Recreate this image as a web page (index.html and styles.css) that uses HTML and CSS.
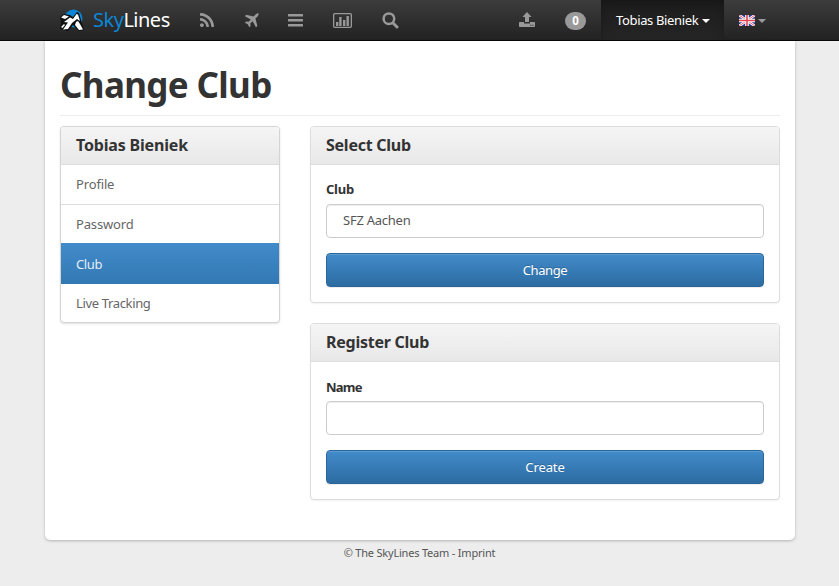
FILE: index.html
```html
<!DOCTYPE html>
<html lang="en">
<head>
<meta charset="utf-8">
<title>SkyLines - Change Club</title>
<link rel="stylesheet" href="styles.css">
</head>
<body>
<nav class="navbar">
  <div class="navbar-inner">
    <a class="brand" href="#">
      <svg class="logo" width="24" height="22" viewBox="0 0 24 22">
        <circle cx="13.500" cy="9.500" r="9" fill="#0b86d6"/>
        <path d="M0 8l4-3 6 1 3 2 4-5 2 1 5 17-5 1-6-6-5 6-8-2 1-6z" fill="#111"/>
        <path d="M1 8.500L4 6l5 1.500L5 10zM4 13l6-4.500L13 10l3.500-5 1.500.5L20 12l-3-2-5 4-4 6-5 .5 5-7zM1 18l3-3 1 1-2.500 3zM16 13l2-1 2 3 3 5.500-4 .5-4-5z" fill="#fff"/>
      </svg>
      <span class="brand-name"><span class="sky">Sky</span>Lines</span>
    </a>
    <a class="icon rss" href="#"><svg width="14" height="14" viewBox="0 128 1408 1408"><path d="M384 1344q0 80-56 136t-136 56-136-56-56-136 56-136 136-56 136 56 56 136zm512 123q2 28-17 48-18 21-47 21h-135q-25 0-43-16.500t-20-41.500q-22-229-184.500-391.500t-391.500-184.500q-25-2-41.500-20t-16.500-43v-135q0-29 21-47 17-17 43-17h5q160 13 306 80.500t259 181.500q114 113 181.500 259t80.500 306zm512 2q2 27-18 47-18 20-46 20h-143q-26 0-44.500-17.500t-19.500-42.500q-12-215-101-408.500t-231.500-336-336-231.500-408.500-102q-25-1-42.500-19.500t-17.500-43.500v-143q0-28 20-46 18-18 44-18h3q262 13 501.500 120t425.500 294q187 186 294 425.500t120 501.500z"/></svg></a>
    <a class="icon plane" href="#"><svg width="15" height="15" viewBox="0 0 15 15"><path d="M14.300.3c.7.6.2 2-.8 3.100L11.400 5.500l2 7.400-1.500 1.300-3.300-5.900-2.300 2.200.3 2.600-1.200 1.200-1.700-3L.9 9.800 2 8.500l2.600.3 2.200-2.300L.9 3.200 2.200 1.700l7.300 1.900L11.600 1.500c1-1 2.200-1.700 2.700-1.200z"/></svg></a>
    <a class="icon list" href="#"><svg width="15" height="13" viewBox="0 0 15 13"><path d="M.5 0h14q.5 0 .5.500v1.500q0 .5-.5.500H.5Q0 2.500 0 2V.5Q0 0 .5 0zM.5 5h14q.5 0 .5.500V7q0 .5-.5.500H.5Q0 7.500 0 7V5.500Q0 5 .5 5zM.5 10h14q.5 0 .5.500V12q0 .5-.5.500H.5Q0 12.500 0 12v-1.500q0-.5.500-.5z"/></svg></a>
    <a class="icon chart" href="#"><svg width="19" height="15" viewBox="0 0 19 15"><rect class="frame" x=".65" y=".65" width="17.700" height="13.700" rx="1"/><path d="M3 9h2.400v4H3zM6.200 4h2.400v9H6.200zM10 7h2.400v6H10zM13.500 3h2.400v10h-2.400z"/></svg></a>
    <a class="icon search" href="#"><svg width="17" height="17" viewBox="0 0 17 17"><circle class="ring" cx="6.900" cy="6.700" r="5.300"/><path class="ring handle" d="M11 11l4 4"/></svg></a>
    <a class="icon upload" href="#"><svg width="16" height="16" viewBox="0 0 16 16"><path d="M8 0l4.600 5H10v5H6V5H3.400zM.8 10H5v1q0 .6.700.6h4.600q.7 0 .7-.6v-1h4.200q.8 0 .8.800v3.400q0 .8-.8.800H.8q-.8 0-.8-.8v-3.400Q0 10 .8 10zm10.400 2.700v1h1.100v-1zm2.100 0v1h1.100v-1z"/></svg></a>
    <a class="count" href="#">0</a>
    <a class="user" href="#"><span class="user-name">Tobias Bieniek</span><i class="caret"></i></a>
    <a class="language" href="#">
      <svg width="16" height="11" viewBox="0 0 16 11">
        <path d="M0 0h16v11H0z" fill="#2b3b91"/>
        <path d="M0 0l16 11M16 0L0 11" stroke="#fff" stroke-width="2.600"/>
        <path d="M0 0l16 11M16 0L0 11" stroke="#e0485a" stroke-width=".9"/>
        <path d="M8 0v11M0 5.500h16" stroke="#fff" stroke-width="3.600"/>
        <path d="M8 0v11M0 5.500h16" stroke="#e04455" stroke-width="1.600"/>
      </svg><i class="caret"></i>
    </a>
  </div>
</nav>
<main class="page">
  <h1><span>Change Club</span></h1>
  <div class="columns">
    <aside class="panel sidebar">
      <h3 class="t-user">Tobias Bieniek</h3>
      <a class="profile" href="#">Profile</a>
      <a class="password" href="#">Password</a>
      <a class="active" href="#">Club</a>
      <a class="tracking" href="#">Live Tracking</a>
    </aside>
    <div class="forms">
      <section class="panel">
        <h3 class="t-select">Select Club</h3>
        <form class="form-select">
          <label>Club</label>
          <div class="control">SFZ Aachen</div>
          <button type="button">Change</button>
        </form>
      </section>
      <section class="panel">
        <h3 class="t-register">Register Club</h3>
        <form class="form-register">
          <label>Name</label>
          <div class="control"></div>
          <button type="button">Create</button>
        </form>
      </section>
    </div>
  </div>
</main>
<footer>© The SkyLines Team - <a href="#">Imprint</a></footer>
</body>
</html>
```
FILE: styles.css
```css
* { box-sizing: border-box; }
body {
  margin: 0;
  height: 586px;
  overflow: hidden;
  background: #ededed;
  color: #333;
  font: 13px/20px "Noto Sans", "Open Sans", sans-serif;
  letter-spacing: -0.25px;
}
a { color: inherit; text-decoration: none; }
svg { display: block; }

.navbar {
  height: 41px;
  background: linear-gradient(#3c3c3c, #222);
  border-bottom: 1px solid #080808;
}
.navbar-inner {
  display: flex;
  align-items: center;
  width: 750px;
  height: 40px;
  margin: 0 auto 0 45px;
  padding-left: 15px;
}
.brand { display: flex; align-items: center; width: 140px; color: #fff; }
.brand-name { margin-left: 9px; font-size: 20px; letter-spacing: -0.5px; white-space: nowrap; }
.sky { color: #0b86d6; }
.icon { flex: none; fill: #999; }
.rss { width: 44px; }
.plane { width: 44px; }
.list { width: 45px; }
.chart { width: 49px; }
.search { width: 137px; padding-top: 1px; }
.upload { width: 46px; }
.frame, .ring { fill: none; stroke: #999; stroke-width: 1.3; }
.ring { stroke-width: 2.5; }
.handle { stroke-width: 3; stroke-linecap: round; }
.count {
  flex: none;
  width: 21px;
  height: 18px;
  margin: 1px 15px 0 0;
  border-radius: 10px;
  background: #999;
  color: #fff;
  font-size: 11.5px;
  font-weight: 700;
  line-height: 18px;
  text-align: center;
}
.user {
  display: flex;
  flex: none;
  align-items: center;
  width: 123px;
  height: 40px;
  padding-left: 15px;
  background: linear-gradient(#1c1c1c, #252525);
  box-shadow: inset 0 3px 9px rgba(0, 0, 0, .2);
  color: #fff;
}
.user-name { width: 83px; white-space: nowrap; letter-spacing: -0.35px; }
.caret {
  margin: 1px 0 0 3px;
  border: 4px solid transparent;
  border-top-color: #fff;
  border-bottom: 0;
}
.language { display: flex; align-items: center; margin-left: 15px; }
.language .caret { border-top-color: #999; }

.page {
  width: 750px;
  height: 499px;
  margin: 0 auto 0 45px;
  padding: 20px 15px 0;
  background: #fff;
  border-radius: 0 0 5px 5px;
  box-shadow: 0 1px 3px rgba(0, 0, 0, .25);
}
h1 {
  height: 55px;
  margin: 0 0 10px;
  border-bottom: 1px solid #eee;
  font-size: 35px;
  line-height: 48px;
  letter-spacing: -0.65px;
}
.columns { display: grid; grid-template-columns: 220px 470px; gap: 30px; align-items: start; }
.panel {
  overflow: hidden;
  border: 1px solid #ddd;
  border-radius: 4px;
  background: #fff;
  box-shadow: 0 1px 2px rgba(0, 0, 0, .06);
}
.sidebar { border-color: #d4d4d4; box-shadow: 0 1px 2px rgba(0, 0, 0, .12); }
h3 {
  height: 38px;
  margin: 0;
  padding-left: 15px;
  border-bottom: 1px solid #ddd;
  background: linear-gradient(#f5f5f5, #e8e8e8);
  font-size: 16px;
  line-height: 37px;
  letter-spacing: -0.25px;
}
.t-user { letter-spacing: -0.18px; }
.sidebar a { display: block; height: 40px; padding-left: 15px; line-height: 39px; color: #666; border-bottom: 1px solid #ddd; }
.sidebar .profile, .sidebar .password { letter-spacing: -0.15px; }
.sidebar .password { height: 38px; border: 0; }
.sidebar .active { height: 41px; border: 0; line-height: 42px; background: linear-gradient(#428bca, #3278b3); color: #e4eef7; letter-spacing: -0.4px; }
.sidebar .tracking { height: 38px; border: 0; letter-spacing: -0.35px; }
.forms { display: grid; gap: 20px; }
form { display: block; height: 137px; padding: 14px 15px; }
label { display: block; height: 25px; font-weight: 700; line-height: 21px; }
.form-register label { line-height: 23px; letter-spacing: -0.8px; }
.control {
  height: 34px;
  margin-bottom: 15px;
  padding-left: 16px;
  border: 1px solid #ccc;
  border-radius: 4px;
  box-shadow: inset 0 1px 1px rgba(0, 0, 0, .075);
  color: #555;
  line-height: 31px;
}
button {
  display: block;
  width: 100%;
  height: 34px;
  padding: 0;
  border: 1px solid #2b669a;
  border-radius: 4px;
  background: linear-gradient(#428bca, #2d6ca2);
  box-shadow: inset 0 1px 0 rgba(255, 255, 255, .15), 0 1px 1px rgba(0, 0, 0, .075);
  color: #fff;
  font: inherit;
  letter-spacing: -0.4px;
  text-shadow: 0 -1px 0 rgba(0, 0, 0, .2);
}
.form-register button { letter-spacing: -0.1px; }
footer { margin-top: 3px; color: #555; font-size: 11px; text-align: center; letter-spacing: -0.2px; }
```
